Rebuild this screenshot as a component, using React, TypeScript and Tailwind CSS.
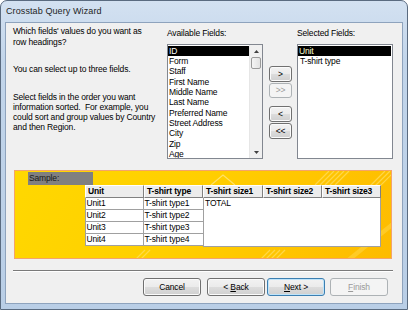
import React from "react";

const FONT = "font-['Liberation_Sans',Arial,sans-serif]";

function Btn({
  children,
  kind = "normal",
  w = "w-[58px]",
  h = "h-[18px]",
}: {
  children: React.ReactNode;
  kind?: "normal" | "default" | "disabled";
  w?: string;
  h?: string;
}) {
  const base = `${w} ${h} flex items-center justify-center rounded-[3px] border text-[8.5px] leading-none`;
  if (kind === "disabled") {
    return (
      <div className={`${base} border-[#adb2b5] bg-[#f4f4f4] text-[#9a9a9a]`}>{children}</div>
    );
  }
  if (kind === "default") {
    return (
      <div
        className={`${base} border-[#3c7fb1] bg-[linear-gradient(to_bottom,#f2f2f2_0%,#ebebeb_50%,#dddddd_50%,#cfcfcf_100%)] text-black shadow-[inset_0_0_0_1px_#bfe4fa]`}
      >
        {children}
      </div>
    );
  }
  return (
    <div
      className={`${base} border-[#707070] bg-[linear-gradient(to_bottom,#f2f2f2_0%,#ebebeb_50%,#dddddd_50%,#cfcfcf_100%)] text-black shadow-[inset_0_0_0_1px_#fbfbfb]`}
    >
      {children}
    </div>
  );
}

const available = [
  "ID",
  "Form",
  "Staff",
  "First Name",
  "Middle Name",
  "Last Name",
  "Preferred Name",
  "Street Address",
  "City",
  "Zip",
  "Age",
];

function HeaderCell({ children, w }: { children: React.ReactNode; w: string }) {
  return (
    <div
      className={`${w} h-[13px] box-border border-t border-l border-t-white border-l-white border-r border-b border-r-[#808080] border-b-[#808080] bg-[#ececec] pl-[2px] text-[8.5px] font-bold leading-[11px] text-black whitespace-nowrap overflow-hidden`}
    >
      {children}
    </div>
  );
}

export default function App() {
  return (
    <div className={`${FONT} w-[408px] h-[310px] bg-white`}>
      <div className="relative w-[408px] h-[310px] box-border rounded-t-[7px] border border-[#5a6b80] bg-[linear-gradient(to_bottom,#d3e1f1_0%,#c2d5ea_20%,#b9cee6_100%)] flex flex-col">
        {/* title bar */}
        <div className="h-[22px] pl-[5px] flex items-center text-[9px] text-[#1e1e1e] tracking-[0.1px]">
          Crosstab Query Wizard
        </div>
        {/* client */}
        <div className="mx-[5px] h-[280px] bg-[#f0f0f0] shadow-[0_0_0_1px_#8ea3bd] flex flex-col pl-[7px] pt-[3px] text-[8.5px] text-black tracking-[-0.15px]">
          {/* top section */}
          <div className="flex h-[133px]">
            <div className="w-[154px] flex flex-col">
              <p className="leading-[10.5px]">
                Which fields' values do you want as
                <br />
                row headings?
              </p>
              <p className="mt-[17px] leading-[10.5px]">You can select up to three fields.</p>
              <p className="mt-[17.5px] leading-[10px]">
                Select fields in the order you want
                <br />
                information sorted.&nbsp; For example, you
                <br />
                could sort and group values by Country
                <br />
                and then Region.
              </p>
            </div>
            {/* available */}
            <div className="w-[96px] flex flex-col">
              <div className="mt-[2px] leading-[10px]">Available Fields:</div>
              <div className="mt-[6px] h-[115px] box-border border border-[#828790] bg-white flex overflow-hidden">
                <div className="flex-1 pt-[0.5px] overflow-hidden">
                  {available.map((f, i) => (
                    <div
                      key={f}
                      className={`h-[10.35px] leading-[10px] pl-[1px] whitespace-nowrap ${
                        i === 0 ? "bg-black text-white" : "text-black"
                      }`}
                    >
                      {f}
                    </div>
                  ))}
                </div>
                {/* scrollbar */}
                <div className="w-[13px] bg-[#f0f0f0] border-l border-[#e6e6e6] flex flex-col items-center">
                  <div className="h-[12px] flex items-center justify-center">
                    <svg width="5" height="3" viewBox="0 0 5 3">
                      <path d="M0 3 L2.5 0 L5 3 Z" fill="#404040" />
                    </svg>
                  </div>
                  <div className="w-[10px] h-[12px] rounded-[2px] border border-[#9a9a9a] bg-[linear-gradient(to_right,#f4f4f4,#e2e2e2)]" />
                  <div className="flex-1" />
                  <div className="h-[12px] flex items-center justify-center">
                    <svg width="5" height="3" viewBox="0 0 5 3">
                      <path d="M0 0 L2.5 3 L5 0 Z" fill="#404040" />
                    </svg>
                  </div>
                </div>
              </div>
            </div>
            {/* move buttons */}
            <div className="ml-[6px] w-[23px] pt-[40px] flex flex-col">
              <Btn w="w-[23px]" h="h-[16px]">&gt;</Btn>
              <div className="mt-[1px]">
                <Btn w="w-[23px]" h="h-[15px]" kind="disabled">
                  &gt;&gt;
                </Btn>
              </div>
              <div className="mt-[8px]">
                <Btn w="w-[23px]" h="h-[16px]">&lt;</Btn>
              </div>
              <div className="mt-[1px]">
                <Btn w="w-[23px]" h="h-[16px]">&lt;&lt;</Btn>
              </div>
            </div>
            {/* selected */}
            <div className="ml-[5px] w-[96px] flex flex-col">
              <div className="mt-[2px] leading-[10px]">Selected Fields:</div>
              <div className="mt-[6px] h-[115px] box-border border border-[#828790] bg-white pt-[0.5px] pr-[1px]">
                <div className="h-[10.35px] leading-[10px] pl-[1px] bg-black text-[#ffffd0]">Unit</div>
                <div className="h-[10.35px] leading-[10px] pl-[2px]">T-shirt type</div>
              </div>
            </div>
          </div>

          {/* sample panel */}
          <div className="relative mt-[11px] ml-[1px] w-[378px] h-[89px] box-border border border-[#f4a46a] bg-[linear-gradient(120deg,#ffd800_0%,#ffcf00_45%,#ffc400_75%,#fdbb00_100%)] overflow-hidden">
            <svg className="absolute inset-0" width="378" height="89" viewBox="0 0 378 89">
              <g stroke="#ffe066" strokeWidth="1.2" opacity="0.7">
                <line x1="300" y1="14" x2="314" y2="0" />
                <line x1="305" y1="14" x2="319" y2="0" />
                <line x1="310" y1="14" x2="324" y2="0" />
                <line x1="315" y1="14" x2="329" y2="0" />
                <line x1="320" y1="14" x2="334" y2="0" />
                <line x1="350" y1="20" x2="370" y2="0" />
                <line x1="355" y1="20" x2="375" y2="0" />
                <line x1="360" y1="20" x2="380" y2="0" />
                <line x1="245" y1="89" x2="255" y2="79" />
                <line x1="250" y1="89" x2="260" y2="79" />
                <line x1="255" y1="89" x2="265" y2="79" />
                <line x1="260" y1="89" x2="270" y2="79" />
                <line x1="120" y1="89" x2="130" y2="79" />
                <line x1="125" y1="89" x2="135" y2="79" />
              </g>
              <path d="M196 14 L208 4 L220 14" stroke="#ffe680" strokeWidth="1.2" fill="none" opacity="0.8" />
              <path d="M330 89 L378 50 L378 56 L337 89 Z" fill="#ffd84a" opacity="0.5" />
            </svg>
            <div className="relative flex flex-col">
              <div className="ml-[13px] mt-[1px] w-[65px] h-[13px] bg-[#808080] text-[#1a1a1a] leading-[13px] pl-[1px]">
                Sample:
              </div>
              <div className="ml-[70px] flex flex-col">
                <div className="flex">
                  <HeaderCell w="w-[59px]">Unit</HeaderCell>
                  <HeaderCell w="w-[59px]">T-shirt type</HeaderCell>
                  <HeaderCell w="w-[60px]">T-shirt size1</HeaderCell>
                  <HeaderCell w="w-[59px]">T-shirt size2</HeaderCell>
                  <HeaderCell w="w-[59px]">T-shirt size3</HeaderCell>
                </div>
                <div className="flex">
                  <div className="w-[118px] flex flex-col">
                    {[1, 2, 3, 4].map((n) => (
                      <div key={n} className="flex h-[12px]">
                        <div className="w-[59px] box-border border-l border-r border-b border-[#a0a0a0] bg-white leading-[11px] pl-[0.5px]">
                          Unit{n}
                        </div>
                        <div className="w-[59px] box-border border-b border-[#a0a0a0] bg-white leading-[11px] pl-[0.5px]">
                          T-shirt type{n}
                        </div>
                      </div>
                    ))}
                  </div>
                  <div className="w-[178px] h-[49px] box-border border border-t-0 border-[#a0a0a0] bg-white leading-[11px] pl-[1px]">
                    TOTAL
                  </div>
                </div>
              </div>
            </div>
          </div>

          {/* separator */}
          <div className="mt-[11px] w-[380px] h-[2px] border-t border-t-[#7a7a7a] border-b border-b-white" />

          {/* bottom buttons */}
          <div className="mt-[6px] flex justify-end pr-[14px]">
            <Btn>Cancel</Btn>
            <div className="ml-[6px]">
              <Btn>
                &lt;&nbsp;<span className="underline">B</span>ack
              </Btn>
            </div>
            <div className="ml-[2px]">
              <Btn kind="default">
                <span className="underline">N</span>ext &gt;
              </Btn>
            </div>
            <div className="ml-[5px]">
              <Btn kind="disabled">
                <span className="underline">F</span>inish
              </Btn>
            </div>
          </div>
        </div>
      </div>
    </div>
  );
}
